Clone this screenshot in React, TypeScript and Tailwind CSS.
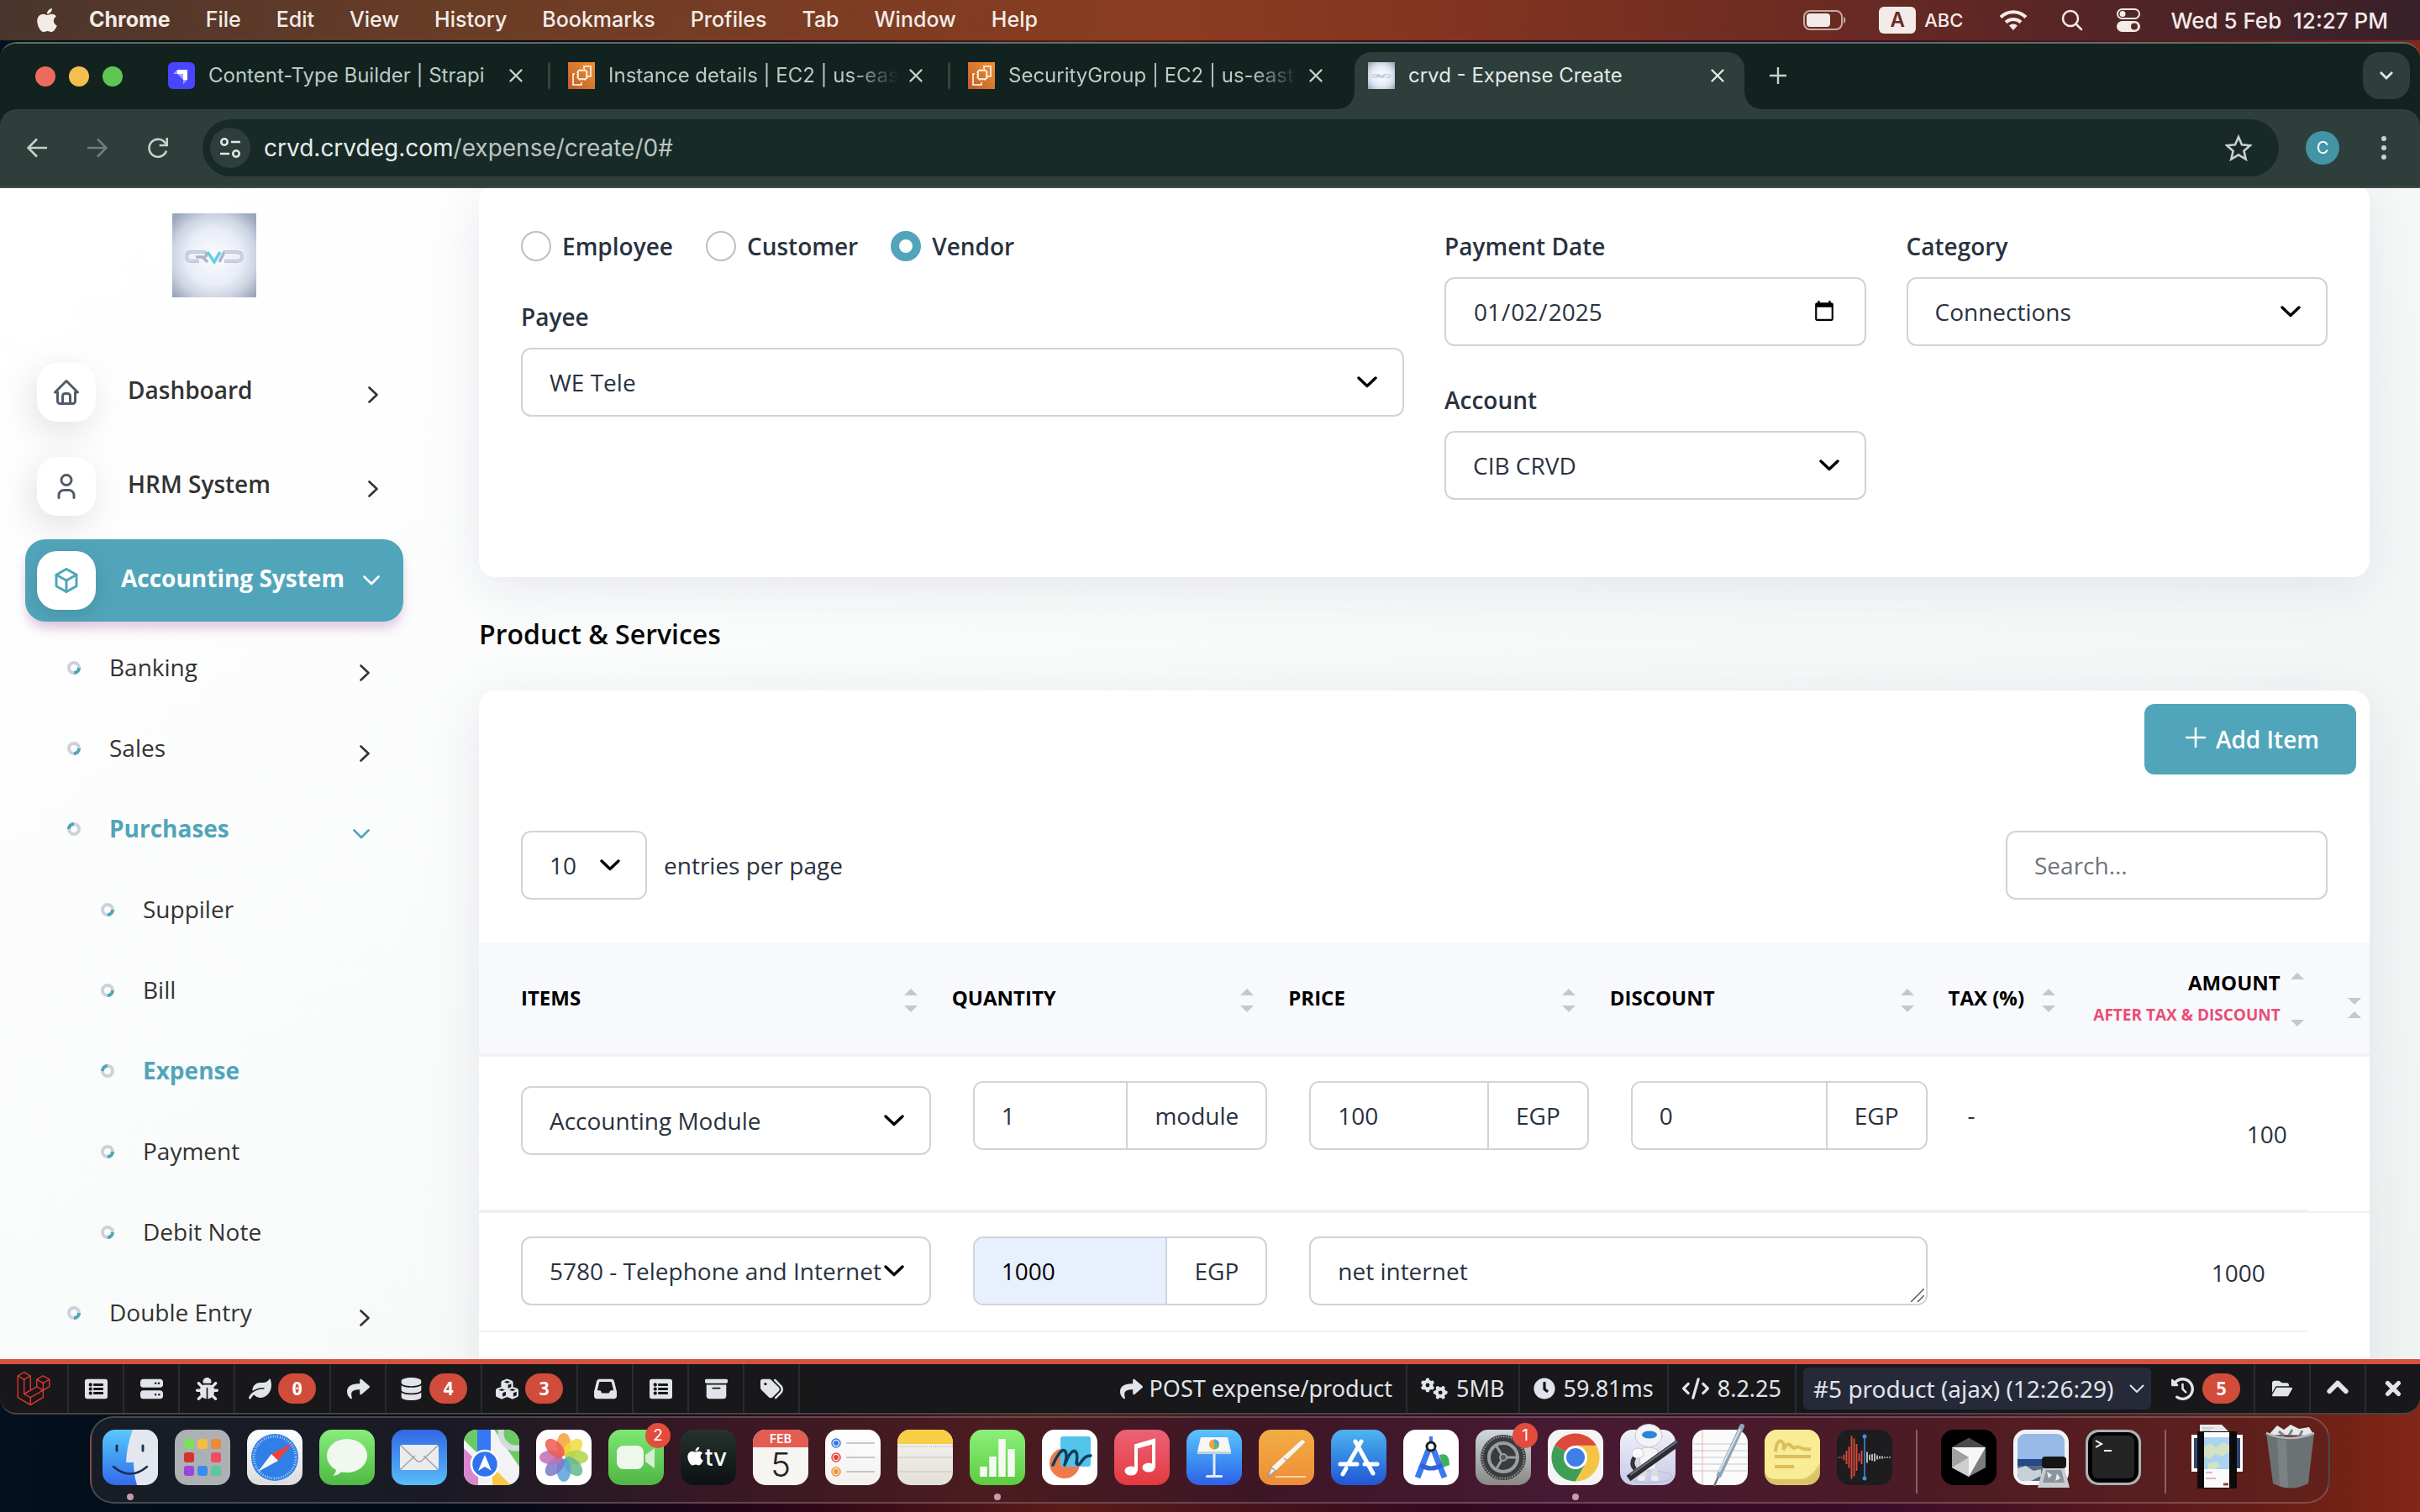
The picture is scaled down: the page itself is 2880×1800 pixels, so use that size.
import { ReactNode } from "react";
import { FaApple, FaClock, FaDatabase, FaLaravel, FaLeaf, FaListAlt, FaShare } from "react-icons/fa";
import {
  FaBoxArchive,
  FaBug,
  FaChevronUp,
  FaClockRotateLeft,
  FaCode,
  FaCubes,
  FaFolderOpen,
  FaGears,
  FaInbox,
  FaServer,
  FaTags,
  FaXmark,
} from "react-icons/fa6";
import { TbBox, TbHome, TbUser } from "react-icons/tb";

const menus = ["File", "Edit", "View", "History", "Bookmarks", "Profiles", "Tab", "Window", "Help"];

const fieldClass =
  "h-[82px] w-full appearance-none rounded-xl border-2 border-[#ced4da] bg-white pl-8 text-[28px] text-[#293240] outline-none";

/* ---------- macOS menu bar ---------- */

function MenuBar() {
  return (
    <header className="flex h-12 shrink-0 items-center bg-[linear-gradient(90deg,#4a352c_0%,#6b3d26_20%,#8b3c20_48%,#833420_60%,#632824_80%,#38202a_100%)] pr-[38px] pl-10 font-['Inter',sans-serif] text-[25px] font-medium text-[#f3ebe8]">
      <FaApple className="mr-[34px] size-8" />
      <nav className="flex items-center gap-[42px]">
        <span className="font-bold">Chrome</span>
        {menus.map((m) => (
          <span key={m}>{m}</span>
        ))}
      </nav>
      <div className="ml-auto flex items-center">
        <svg viewBox="0 0 52 24" className="h-6 w-[52px]" fill="none">
          <rect x="1" y="1" width="45" height="22" rx="7" stroke="#c8aaa2" strokeWidth="2" />
          <rect x="4" y="4" width="28" height="16" rx="4" fill="#f3ebe8" />
          <path d="M48 8c3 1 3 7 0 8z" fill="#c8aaa2" />
        </svg>
        <span className="ml-[38px] flex h-8 w-11 items-center justify-center rounded-md bg-[#f3ebe8] text-2xl font-semibold text-[#6a2a22]">A</span>
        <span className="ml-[10px] text-[22px]">ABC</span>
        <svg viewBox="0 0 34 26" className="ml-[43px] h-[26px] w-[34px]" fill="none" stroke="#f3ebe8" strokeWidth="4">
          <path d="M2 9.500a21 21 0 0 1 30 0" />
          <path d="M8 15.500a13 13 0 0 1 18 0" />
          <path d="M17 25l-5-5.500a7 7 0 0 1 10 0z" fill="#f3ebe8" stroke="none" />
        </svg>
        <svg viewBox="0 0 26 26" className="ml-10 size-[26px]" fill="none" stroke="#f3ebe8" strokeWidth="2.500" strokeLinecap="round">
          <circle cx="11" cy="11" r="9" />
          <path d="M17.500 17.500l6.500 6.500" />
        </svg>
        <svg viewBox="0 0 28 28" className="ml-10 size-7" fill="none">
          <rect x="1" y="1" width="26" height="11" rx="5.500" stroke="#f3ebe8" strokeWidth="2" />
          <circle cx="7" cy="6.500" r="3.500" fill="#f3ebe8" />
          <rect x="0" y="15" width="28" height="13" rx="6.500" fill="#f3ebe8" />
          <circle cx="21" cy="21.500" r="4" fill="#5d2725" />
        </svg>
        <span className="ml-9 text-[26px] whitespace-pre">Wed 5 Feb  12:27 PM</span>
      </div>
    </header>
  );
}

/* ---------- Browser chrome ---------- */

function CloseIcon({ color = "#c5d2ce" }) {
  return (
    <svg viewBox="0 0 16 16" className="size-4" stroke={color} strokeWidth="2.400" strokeLinecap="round">
      <path d="M1.500 1.500l13 13M14.500 1.500l-13 13" />
    </svg>
  );
}

function StrapiIcon() {
  return (
    <svg viewBox="0 0 32 32" className="size-8 shrink-0">
      <rect width="32" height="32" rx="6" fill="#4945ff" />
      <path d="M11 9h12v12h-5v-7h-7z" fill="#fff" />
      <path d="M6 14l5-5v5zM18 21h5l-5 5z" fill="#a5a3ff" />
      <path d="M11 14h7v7z" fill="#a5a3ff" />
    </svg>
  );
}

function Ec2Icon() {
  return (
    <svg viewBox="0 0 32 32" className="size-8 shrink-0 bg-linear-to-tr from-[#c25a2c] to-[#ec9430]" fill="none" stroke="#fff" strokeWidth="1.500">
      <rect x="12" y="10" width="10" height="10" rx="1" />
      <path d="M14 10V8M17 10V8M20 10V8M14 22v-2M17 22v-2M20 22v-2M12 12h-2M12 15h-2M12 18h-2M24 12h-2M24 15h-2M24 18h-2" strokeWidth="1" />
      <path d="M19 8V5h8v12h-4M8 14H6v13h10v-3" />
    </svg>
  );
}

function CrvdLogo({ className }: { className: string }) {
  return (
    <svg viewBox="0 0 100 100" className={className} fill="none">
      <defs>
        <radialGradient id="crvd" cx="50%" cy="52%" r="66%">
          <stop offset="0" stopColor="#fbfcff" />
          <stop offset="0.500" stopColor="#e9edf6" />
          <stop offset="0.750" stopColor="#cdd4e2" />
          <stop offset="1" stopColor="#9ba6bb" />
        </radialGradient>
      </defs>
      <rect width="100" height="100" fill="url(#crvd)" />
      <g stroke="#aeb4cc" strokeWidth="3.500">
        <path d="M40 46H22q-5 0-5 5.500t5 5.500h10" />
        <path d="M28 52h10q3-1 3-3t-3-3M36 52l6 6" />
        <path d="M56 58l6-12h14q7 0 7 5.500t-7 5.500H62" />
      </g>
      <g stroke="#eef1fa" strokeWidth="1.200">
        <path d="M40 46H22q-5 0-5 5.500t5 5.500h10" />
        <path d="M62 46h14q7 0 7 5.500t-7 5.500H62" />
      </g>
      <path d="M42 46l8 12 7-12" stroke="#63cfe4" strokeWidth="3.500" />
    </svg>
  );
}

function Tab({ icon, title, fade = false }: { icon: ReactNode; title: string; fade?: boolean }) {
  return (
    <div className="flex h-14 w-[431px] items-center">
      {icon}
      <span
        className={
          fade
            ? "ml-4 w-[352px] [mask-image:linear-gradient(90deg,#000_82%,transparent_98%)] text-2xl whitespace-nowrap text-[#bccac6]"
            : "ml-4 w-[352px] text-2xl whitespace-nowrap text-[#bccac6]"
        }
      >
        {title}
      </span>
      <button aria-label="Close tab" className="ml-[6px]">
        <CloseIcon />
      </button>
    </div>
  );
}

function BrowserBar() {
  return (
    <div className="shrink-0 bg-[#12221f] font-['Inter',sans-serif]">
      <div className="flex h-[78px] items-end">
        <div className="flex h-[68px] w-full items-start pr-3 pl-[42px]">
          <div className="mt-[17px] flex w-[158px] shrink-0 gap-4">
            <span className="size-6 rounded-full bg-[#ed6a5e]" />
            <span className="size-6 rounded-full bg-[#f5bf4f]" />
            <span className="size-6 rounded-full bg-[#61c554]" />
          </div>
          <div className="flex h-14 items-center gap-[21px]">
            <Tab icon={<StrapiIcon />} title="Content-Type Builder | Strapi" />
            <span className="h-8 w-[3px] rounded bg-[#33443f]" />
            <Tab fade icon={<Ec2Icon />} title="Instance details | EC2 | us-eas" />
            <span className="h-8 w-[3px] rounded bg-[#33443f]" />
            <Tab fade icon={<Ec2Icon />} title="SecurityGroup | EC2 | us-east" />
          </div>
          <div className="relative ml-[29px] flex h-[68px] w-[464px] shrink-0 items-start rounded-t-[20px] bg-[#2d3e3b] px-4 pt-3">
            <svg viewBox="0 0 24 24" className="absolute bottom-0 -left-6 size-6">
              <path d="M24 0v24H0Q24 24 24 0z" fill="#2d3e3b" />
            </svg>
            <svg viewBox="0 0 24 24" className="absolute -right-6 bottom-0 size-6">
              <path d="M0 0v24h24Q0 24 0 0z" fill="#2d3e3b" />
            </svg>
            <CrvdLogo className="size-8 shrink-0" />
            <span className="ml-4 text-2xl leading-8 text-[#e2e8e6]">crvd - Expense Create</span>
            <button aria-label="Close tab" className="mt-2 mr-2 ml-auto">
              <CloseIcon color="#e2e8e6" />
            </button>
          </div>
          <button aria-label="New tab" className="mt-[18px] ml-[30px]">
            <svg viewBox="0 0 20 20" className="size-5" stroke="#c5d2ce" strokeWidth="2.400">
              <path d="M10 0v20M0 10h20" />
            </svg>
          </button>
          <button aria-label="Search tabs" className="ml-auto flex size-14 items-center justify-center rounded-[20px] bg-[#2d3e3b]">
            <svg viewBox="0 0 16 10" className="h-[10px] w-4" fill="none" stroke="#e2e8e6" strokeWidth="2.800">
              <path d="M1 1l7 7 7-7" />
            </svg>
          </button>
        </div>
      </div>
      <div className="flex h-[94px] items-center rounded-t-[20px] border-b-2 border-[#444b48] bg-[#2d3e3b] pr-9 pl-8">
        <button aria-label="Back">
          <svg viewBox="0 0 24 24" className="size-6" fill="none" stroke="#c5d2ce" strokeWidth="2.600">
            <path d="M24 12H2M12 1.500L1.500 12 12 22.500" />
          </svg>
        </button>
        <button aria-label="Forward" className="ml-12">
          <svg viewBox="0 0 24 24" className="size-6" fill="none" stroke="#6d7f7a" strokeWidth="2.600">
            <path d="M0 12h22M12 1.500L22.500 12 12 22.500" />
          </svg>
        </button>
        <button aria-label="Reload" className="ml-12">
          <svg viewBox="0 0 24 24" className="size-6" fill="none" stroke="#c5d2ce" strokeWidth="2.600">
            <path d="M22 15.500A10.500 10.500 0 1 1 20.500 6l2 2.500" />
            <path d="M22.700 0v9h-9" />
          </svg>
        </button>
        <div className="ml-[41px] flex h-[68px] flex-1 items-center rounded-full bg-[#182a27] pr-8 pl-[9px]">
          <span className="flex size-12 items-center justify-center rounded-full bg-[#2d3e3b]">
            <svg viewBox="0 0 26 24" className="h-6 w-[26px]" fill="none" stroke="#e2e8e6" strokeWidth="2.600">
              <circle cx="6" cy="5" r="3.700" />
              <path d="M14 5h11M1 19h11" />
              <circle cx="20" cy="19" r="3.700" />
            </svg>
          </span>
          <span className="ml-4 text-[28px] text-[#e6ecea]">
            crvd.crvdeg.com<span className="text-[#b9c5c2]">/expense/create/0#</span>
          </span>
          <svg viewBox="0 0 32 32" className="ml-auto size-8" fill="none" stroke="#c9cfd0" strokeWidth="2.600">
            <path d="M16 3l4 9.200 10 .9-7.600 6.600 2.300 9.800L16 24.300l-8.700 5.200 2.300-9.800L2 13.100l10-.9z" />
          </svg>
        </div>
        <span className="ml-8 flex size-10 items-center justify-center rounded-full bg-[#4394a5] text-xl text-white">C</span>
        <svg viewBox="0 0 6 28" className="mr-1 ml-[50px] h-7 w-[6px]" fill="#c5d2ce">
          <circle cx="3" cy="3" r="3" />
          <circle cx="3" cy="14" r="3" />
          <circle cx="3" cy="25" r="3" />
        </svg>
      </div>
    </div>
  );
}

/* ---------- Sidebar ---------- */

function Chevron({ dir }: { dir: "right" | "down" }) {
  return dir === "right" ? (
    <svg viewBox="0 0 12 20" className="h-5 w-3" fill="none" stroke="currentColor" strokeWidth="2.600" strokeLinecap="round" strokeLinejoin="round">
      <path d="M1.500 1.500l9 8.500-9 8.500" />
    </svg>
  ) : (
    <svg viewBox="0 0 20 12" className="h-3 w-5" fill="none" stroke="currentColor" strokeWidth="2.600" strokeLinecap="round" strokeLinejoin="round">
      <path d="M1.500 1.500L10 10l8.500-8.500" />
    </svg>
  );
}

const modules = [
  { name: "Dashboard", icon: TbHome, active: false },
  { name: "HRM System", icon: TbUser, active: false },
  { name: "Accounting System", icon: TbBox, active: true },
];

const links = [
  { name: "Banking", level: 1, arrow: "right", active: false },
  { name: "Sales", level: 1, arrow: "right", active: false },
  { name: "Purchases", level: 1, arrow: "down", active: true },
  { name: "Suppiler", level: 2, arrow: "", active: false },
  { name: "Bill", level: 2, arrow: "", active: false },
  { name: "Expense", level: 2, arrow: "", active: true },
  { name: "Payment", level: 2, arrow: "", active: false },
  { name: "Debit Note", level: 2, arrow: "", active: false },
  { name: "Double Entry", level: 1, arrow: "right", active: false },
];

function Bullet({ active }: { active: boolean }) {
  return (
    <svg viewBox="0 0 16 16" className="mb-[2px] size-4" fill="none" strokeWidth="4">
      <circle cx="8" cy="8" r="6" stroke="#cdd2da" />
      <path d={active ? "M2 8a6 6 0 0 1 6-6" : "M14 8a6 6 0 0 1-6 6"} stroke="#51a5ba" />
    </svg>
  );
}

function Sidebar() {
  return (
    <aside className="w-[510px] shrink-0 px-[30px] pt-[30px] text-[28px] text-[#333]">
      <CrvdLogo className="mx-auto size-[100px]" />
      <nav className="mt-16">
        <ul className="flex flex-col gap-[14px]">
          {modules.map(({ name, icon: Icon, active }) => (
            <li key={name}>
              <a
                href="#"
                className={
                  active
                    ? "flex h-[98px] items-center rounded-3xl bg-[#51a5ba] pr-7 pl-[14px] font-bold text-white shadow-[0_10px_14px_-2px_rgba(180,120,180,0.4)]"
                    : "flex h-[98px] items-center pr-[30px] pl-[14px] font-semibold"
                }
              >
                <span
                  className={
                    active
                      ? "mr-[30px] flex size-[70px] items-center justify-center rounded-3xl bg-white text-[#51a5ba] shadow-[0_6px_24px_rgba(0,0,0,0.12)]"
                      : "mr-[38px] flex size-[70px] items-center justify-center rounded-3xl bg-white text-[#525b69] shadow-[-6px_12px_44px_rgba(0,0,0,0.12)]"
                  }
                >
                  <Icon className="size-9" />
                </span>
                <span className="pb-[6px]">{name}</span>
                <span className={active ? "ml-auto" : "ml-auto pt-[6px]"}>
                  <Chevron dir={active ? "down" : "right"} />
                </span>
              </a>
            </li>
          ))}
        </ul>
        <ul className="mt-2">
          {links.map((l) => (
            <li key={l.name}>
              <a
                href="#"
                className={`flex h-24 items-center pr-10 ${l.level === 1 ? "pl-[50px]" : "pl-[90px]"} ${l.active ? "font-bold text-[#51a5ba]" : "font-medium"}`}
              >
                <Bullet active={l.active} />
                <span className="ml-[34px] pb-1">{l.name}</span>
                <span className="ml-auto pt-[10px]">
                  {l.arrow === "right" && <Chevron dir="right" />}
                  {l.arrow === "down" && <Chevron dir="down" />}
                </span>
              </a>
            </li>
          ))}
        </ul>
      </nav>
    </aside>
  );
}

/* ---------- Expense form ---------- */

function Select({ id, value, label }: { id: string; value: string; label?: string }) {
  return (
    <div className="relative">
      <select id={id} aria-label={label} className={`${fieldClass} pr-12`}>
        <option>{value}</option>
      </select>
      <svg viewBox="0 0 24 14" className="pointer-events-none absolute top-[34px] right-8 h-[14px] w-6" fill="none" stroke="#000" strokeWidth="3.400" strokeLinecap="round" strokeLinejoin="round">
        <path d="M2 2l10 9.500L22 2" />
      </svg>
    </div>
  );
}

function Field({ id, label, children }: { id: string; label: string; children: ReactNode }) {
  return (
    <div>
      <label htmlFor={id} className="mb-[18px] block text-[28px] leading-[38px] font-semibold">
        {label}
      </label>
      {children}
    </div>
  );
}

function InputGroup({ label, value, unit, filled = false }: { label: string; value: string; unit: string; filled?: boolean }) {
  return (
    <div className="flex h-[82px] overflow-hidden rounded-xl border-2 border-[#ced4da]">
      <input
        aria-label={label}
        defaultValue={value}
        className={filled ? "w-0 flex-1 bg-[#e8effd] pl-8 text-black outline-none" : "w-0 flex-1 bg-white pl-8 outline-none"}
      />
      <span className="flex items-center border-l-2 border-[#ced4da] px-8">{unit}</span>
    </div>
  );
}

function Sort({ variant = "normal" }: { variant?: "normal" | "tall" | "flipped" }) {
  const up = <path d="M0 8l8-8 8 8z" />;
  const down = <path d="M0 0l8 8 8-8z" />;
  const gap = variant === "tall" ? "gap-12" : variant === "flipped" ? "gap-2" : "gap-3";
  return (
    <span className={`flex flex-col ${gap}`}>
      <svg viewBox="0 0 16 8" className="h-2 w-4" fill="#c6c7cb">{variant === "flipped" ? down : up}</svg>
      <svg viewBox="0 0 16 8" className="h-2 w-4" fill="#c6c7cb">{variant === "flipped" ? up : down}</svg>
    </span>
  );
}

function HeadCell({ title, first = false }: { title: string; first?: boolean }) {
  return (
    <th className={first ? "border-b-4 border-[#f1f1f1] pr-4 pl-[50px]" : "border-b-4 border-[#f1f1f1] pr-4 pl-[25px]"}>
      <div className="flex items-center justify-between">
        {title}
        <span className="pt-[6px]">
          <Sort />
        </span>
      </div>
    </th>
  );
}

function ItemsTable() {
  return (
    <table className="mt-[51px] w-full table-fixed border-separate border-spacing-0 text-left text-[28px]">
      <colgroup>
        <col className="w-[23.9%]" />
        <col className="w-[17.8%]" />
        <col className="w-[17%]" />
        <col className="w-[17.9%]" />
        <col className="w-[7.5%]" />
        <col className="w-[12.6%]" />
        <col className="w-[3.3%]" />
      </colgroup>
      <thead className="bg-[#f8f9fd] text-2xl font-bold text-black">
        <tr className="h-[136px]">
          <HeadCell first title="ITEMS" />
          <HeadCell title="QUANTITY" />
          <HeadCell title="PRICE" />
          <HeadCell title="DISCOUNT" />
          <HeadCell title="TAX (%)" />
          <th className="border-b-4 border-[#f1f1f1] pt-1 pr-1">
            <div className="flex items-center justify-end gap-3">
              <div className="text-right leading-9">
                AMOUNT
                <small className="block text-[19px] leading-10 text-[#ea4c74]">AFTER TAX &amp; DISCOUNT</small>
              </div>
              <Sort variant="tall" />
            </div>
          </th>
          <th className="border-b-4 border-[#f1f1f1] pt-6 pr-[10px]">
            <div className="flex justify-end">
              <Sort variant="flipped" />
            </div>
          </th>
        </tr>
      </thead>
      <tbody className="align-top">
        <tr className="h-[186px]">
          <td className="border-b-4 border-[#f1f1f1] pt-[35px] pl-[50px]">
            <Select id="item" label="Item" value="Accounting Module" />
          </td>
          <td className="border-b-4 border-[#f1f1f1] pt-[29px] pl-[50px]">
            <InputGroup label="Quantity" value="1" unit="module" />
          </td>
          <td className="border-b-4 border-[#f1f1f1] pt-[29px] pl-[50px]">
            <InputGroup label="Price" value="100" unit="EGP" />
          </td>
          <td className="border-b-4 border-[#f1f1f1] pt-[29px] pl-[50px]">
            <InputGroup label="Discount" value="0" unit="EGP" />
          </td>
          <td className="border-b-4 border-[#f1f1f1] pt-[48px] pl-[48px]">-</td>
          <td className="border-b-4 border-[#f1f1f1] pt-[71px] pr-6 text-right">100</td>
          <td className="border-b-2 border-[#f1f1f1]" />
        </tr>
        <tr className="h-[142px]">
          <td className="border-b-2 border-[#f1f1f1] pt-7 pl-[50px]">
            <Select id="account-line" label="Account line" value="5780 - Telephone and Internet" />
          </td>
          <td className="border-b-2 border-[#f1f1f1] pt-7 pl-[50px]">
            <InputGroup filled label="Amount" value="1000" unit="EGP" />
          </td>
          <td colSpan={2} className="border-b-2 border-[#f1f1f1] pt-7 pl-[50px]">
            <div className="relative">
              <textarea aria-label="Description" defaultValue="net internet" className={`${fieldClass} block resize-none overflow-hidden pt-[18px]`} />
              <svg viewBox="0 0 16 16" className="absolute right-1 bottom-1 size-4" stroke="#555" strokeWidth="1.500">
                <path d="M0 16L16 0M8 16l8-8" />
              </svg>
            </div>
          </td>
          <td className="border-b-2 border-[#f1f1f1]" />
          <td className="border-b-2 border-[#f1f1f1] pt-[50px] pr-[50px] text-right">1000</td>
          <td />
        </tr>
      </tbody>
    </table>
  );
}

function ExpensePage() {
  return (
    <main className="min-w-0 flex-1 px-[60px] text-[#293240]">
      <section className="-mt-[6px] grid grid-cols-4 gap-12 rounded-[20px] bg-white px-[50px] pt-14 pb-[92px] shadow-[0_12px_60px_rgba(182,186,203,0.3)]">
        <div className="col-span-2 flex flex-col gap-[46px]">
          <div className="flex h-[38px] items-center gap-[39px] text-[28px] font-semibold">
            {["Employee", "Customer", "Vendor"].map((type) => (
              <label key={type} className="flex items-center gap-[13px]">
                <input
                  type="radio"
                  name="type"
                  defaultChecked={type === "Vendor"}
                  className="size-9 appearance-none rounded-full border-2 border-[#bfbfbf] bg-white checked:border-[10px] checked:border-[#51a5ba]"
                />
                {type}
              </label>
            ))}
          </div>
          <Field id="payee" label="Payee">
            <Select id="payee" value="WE Tele" />
          </Field>
        </div>
        <div className="flex flex-col gap-[45px]">
          <Field id="date" label="Payment Date">
            <input
              id="date"
              type="date"
              defaultValue="2025-01-02"
              className={`${fieldClass} pr-8 [&::-webkit-calendar-picker-indicator]:size-7`}
            />
          </Field>
          <Field id="account" label="Account">
            <Select id="account" value="CIB CRVD" />
          </Field>
        </div>
        <Field id="category" label="Category">
          <Select id="category" value="Connections" />
        </Field>
      </section>

      <h2 className="mt-[46px] text-[32px] leading-[44px] font-semibold text-[#060606]">Product &amp; Services</h2>

      <section className="mt-[45px] h-[900px] rounded-[20px] bg-white pt-4 shadow-[0_12px_60px_rgba(182,186,203,0.3)]">
        <div className="flex justify-end pr-4">
          <button className="flex h-[84px] items-center gap-3 rounded-xl bg-[#51a5ba] pr-11 pl-[49px] text-[28px] font-semibold text-white">
            <svg viewBox="0 0 24 24" className="mb-1 size-6" stroke="#fff" strokeWidth="2.500" strokeLinecap="round">
              <path d="M12 1v22M1 12h22" />
            </svg>
            Add Item
          </button>
        </div>
        <div className="mt-[67px] flex items-center justify-between px-[50px] text-[28px]">
          <div className="flex items-center gap-5">
            <div className="w-[150px]">
              <Select id="entries" value="10" />
            </div>
            <label htmlFor="entries">entries per page</label>
          </div>
          <div className="w-[383px]">
            <input type="search" aria-label="Search" placeholder="Search..." className={`${fieldClass} placeholder:text-[#6c757d]`} />
          </div>
        </div>
        <ItemsTable />
      </section>
    </main>
  );
}

/* ---------- Debug bar ---------- */

const debugTabs = [
  { icon: FaListAlt, label: "Messages" },
  { icon: FaServer, label: "Timeline" },
  { icon: FaBug, label: "Exceptions" },
  { icon: FaLeaf, label: "Views", count: "0" },
  { icon: FaShare, label: "Route" },
  { icon: FaDatabase, label: "Queries", count: "4" },
  { icon: FaCubes, label: "Models", count: "3" },
  { icon: FaInbox, label: "Mails" },
  { icon: FaListAlt, label: "Gate" },
  { icon: FaBoxArchive, label: "Session" },
  { icon: FaTags, label: "Request" },
];

function Count({ children }: { children: ReactNode }) {
  return (
    <span className="flex h-9 w-[45px] items-center justify-center rounded-full bg-[#d14c3b] font-['DejaVu_Sans_Mono',monospace] text-[22px] font-bold text-white">{children}</span>
  );
}

function DebugBar() {
  return (
    <footer className="flex h-[66px] shrink-0 items-stretch overflow-hidden rounded-b-[20px] border-t-[6px] border-b-2 border-t-[#d8523d] border-b-[#444] bg-[#18181a] font-['Noto_Sans',sans-serif] text-[27px] text-[#e1e4ea]">
      <span className="flex w-20 items-center justify-center">
        <FaLaravel className="size-10 text-[#ef3b2d]" />
      </span>
      {debugTabs.map(({ icon: Icon, label, count }) => (
        <button key={label} aria-label={label} className="flex min-w-[66px] items-center justify-center gap-2 border-l-2 border-[#292a35] px-4">
          <Icon className="size-[27px]" />
          {count && <Count>{count}</Count>}
        </button>
      ))}
      <span className="border-l-2 border-[#292a35]" />
      <span className="ml-auto flex items-center gap-2 pr-4">
        <FaShare className="size-[27px]" />
        POST expense/product
      </span>
      <span className="flex items-center gap-[10px] border-l-2 border-[#292a35] px-4">
        <FaGears className="size-8" />
        5MB
      </span>
      <span className="flex items-center gap-[10px] border-l-2 border-[#292a35] px-4">
        <FaClock className="size-[26px]" />
        59.81ms
      </span>
      <span className="flex items-center gap-[10px] border-l-2 border-[#292a35] px-4">
        <FaCode className="size-8" />
        8.2.25
      </span>
      <span className="flex items-center border-l-2 border-[#292a35] px-2">
        <span className="relative flex h-[50px] items-center rounded-md bg-[#262a38]">
          <select aria-label="Request" className="h-full w-[414px] appearance-none bg-transparent pl-3 text-[28px] outline-none">
            <option>#5 product (ajax) (12:26:29)</option>
          </select>
          <svg viewBox="0 0 18 10" className="pointer-events-none absolute right-2 h-[10px] w-[18px]" fill="none" stroke="#e1e4ea" strokeWidth="2">
            <path d="M1 1l8 8 8-8" />
          </svg>
        </span>
      </span>
      <button aria-label="History" className="flex items-center gap-[10px] pr-4 pl-4">
        <FaClockRotateLeft className="size-[27px]" />
        <Count>5</Count>
      </button>
      <button aria-label="Open" className="flex w-[66px] items-center justify-center border-l-2 border-[#292a35]">
        <FaFolderOpen className="size-6" />
      </button>
      <button aria-label="Minimize" className="flex w-[66px] items-center justify-center border-l-2 border-[#292a35]">
        <FaChevronUp className="size-[26px]" strokeWidth="50" stroke="currentColor" />
      </button>
      <button aria-label="Close" className="flex w-[66px] items-center justify-center border-l-2 border-[#292a35]">
        <FaXmark className="size-[26px]" strokeWidth="40" stroke="currentColor" />
      </button>
    </footer>
  );
}

/* ---------- Dock ---------- */

function Tile({ className, children, badge, running = false }: { className: string; children: ReactNode; badge?: string; running?: boolean }) {
  return (
    <div className="relative flex size-[66px] shrink-0 justify-center">
      <svg viewBox="0 0 66 66" className={`size-[66px] rounded-[15px] ${className}`} fill="none">
        {children}
      </svg>
      {badge && (
        <span className="absolute -top-2 -right-2 flex size-[30px] items-center justify-center rounded-full bg-[#e34b3d] text-[19px] text-white">{badge}</span>
      )}
      {running && <span className="absolute top-[76px] size-2 rounded-full bg-[#c79bab]" />}
    </div>
  );
}

const launchpad = ["#7ee05a", "#f5bd3d", "#ef8a35", "#d3352d", "#a9b2b5", "#ef4d62", "#9c45d8", "#3a8df0", "#5fc79d"];
const petals = ["#f6a03a", "#f0da3c", "#b5d24a", "#63b98a", "#5aa2dd", "#7b78c8", "#c070b4", "#ee5b50"];
const redWave = [1, 1, 4, 10, 16, 32, 28, 20, 6, 10];
const whiteWave = [8, 4, 5, 6, 3, 2, 2, 1, 1, 1];

function Dock() {
  return (
    <div className="mx-auto mt-[2px] flex h-[104px] items-start gap-5 rounded-[28px] border-2 border-white/20 bg-[linear-gradient(90deg,#171d26_0%,#1b1a24_16%,#391824_28%,#4b1c20_40%,#3d1626_52%,#471a33_66%,#4d1b25_82%,#63211a_100%)] px-[13px] pt-[14px] font-['Inter',sans-serif]">
      <Tile running className="overflow-hidden bg-linear-to-b from-[#5ac8fa] to-[#3569ea]">
        <path d="M36 0Q29 18 28 39h9q0 14 4 27h25V0z" fill="#e3e8ef" />
        <path d="M17 19v6M48 19v6" stroke="#1c3357" strokeWidth="3" strokeLinecap="round" />
        <path d="M13 44q20 17 40 0" stroke="#1c2f4f" strokeWidth="2.500" strokeLinecap="round" />
      </Tile>
      <Tile className="bg-[#adb0b4]">
        {launchpad.map((c, i) => (
          <rect key={c} x={11 + (i % 3) * 16} y={11 + Math.floor(i / 3) * 16} width="12" height="12" rx="3" fill={c} />
        ))}
      </Tile>
      <Tile className="bg-linear-to-b from-white to-[#dcdcdc]">
        <circle cx="33" cy="33" r="28" fill="#2f7fe6" />
        <circle cx="33" cy="33" r="25" stroke="#cfe3fb" strokeWidth="3" strokeDasharray="0.800 2" />
        <path d="M54 16L37 37l-8-8z" fill="#ec4537" />
        <path d="M13 50l16-21 8 8z" fill="#f6f6f6" />
      </Tile>
      <Tile className="bg-linear-to-b from-[#86ee79] to-[#4fb944]">
        <ellipse cx="33" cy="31" rx="24" ry="20" fill="#f0f8ef" />
        <path d="M20 44q1 7-4 11 8-1 12-7z" fill="#f0f8ef" />
      </Tile>
      <Tile className="bg-linear-to-b from-[#3467e3] to-[#5bbcf8]">
        <rect x="10" y="18" width="46" height="30" rx="3" fill="#ececec" />
        <path d="M11 47l17-16M55 47L38 31M11 19l18 17q4 4 8 0l18-17" stroke="#a0a5aa" strokeWidth="1.500" />
      </Tile>
      <Tile className="overflow-hidden bg-[#f2f3f4]">
        <path d="M0 0h16v28L0 12zM36 0h30v44z" fill="#6bcb62" />
        <path d="M0 22l17 17v27H0z" fill="#d987cc" />
        <path d="M34 66V44l22 22z" fill="#f7c945" />
        <path d="M16 0h16v30H16z" fill="#3478f6" />
        <circle cx="62" cy="4" r="18" stroke="#d5dade" strokeWidth="7" />
        <circle cx="25" cy="41" r="16" fill="#2f74ee" stroke="#fff" strokeWidth="2.500" />
        <path d="M25 30l8 19-8-5-8 5z" fill="#fff" />
      </Tile>
      <Tile className="bg-white">
        {petals.map((c, i) => (
          <ellipse key={c} cx="33" cy="18" rx="8.500" ry="14" fill={c} opacity="0.850" transform={`rotate(${i * 45} 33 33)`} />
        ))}
        <circle cx="33" cy="33" r="2" fill="#fff" />
      </Tile>
      <Tile badge="2" className="bg-linear-to-b from-[#7de872] to-[#4fb643]">
        <rect x="10" y="19" width="32" height="28" rx="8" fill="#eef7ec" />
        <path d="M44 30l11-8v24l-11-8z" fill="#d6eed2" />
      </Tile>
      <Tile className="bg-linear-to-b from-[#26332f] to-[#0c1113]">
        <FaApple x="5" y="19" size={25} color="#fff" />
        <text x="29" y="43" fontSize="28" fontWeight="500" fill="#fff">tv</text>
      </Tile>
      <Tile className="overflow-hidden bg-[#f6f5f2]">
        <path d="M0 0h66v21H0z" fill="#e35d52" />
        <text x="33" y="16" fontSize="14" fontWeight="600" fill="#fff" textAnchor="middle">FEB</text>
        <text x="33" y="56" fontSize="40" fill="#222" textAnchor="middle" fontWeight="300">5</text>
      </Tile>
      <Tile className="bg-linear-to-b from-white to-[#f2f1ee]">
        {["#2f76f0", "#e2453a", "#ec9430"].map((c, i) => (
          <g key={c}>
            <circle cx="13" cy={16 + i * 17} r="5" stroke={c} strokeWidth="1.500" />
            <circle cx="13" cy={16 + i * 17} r="3" fill={c} />
            <path d={`M25 ${16 + i * 17}h34`} stroke="#b9b9b9" strokeWidth="1.500" />
          </g>
        ))}
      </Tile>
      <Tile className="overflow-hidden bg-linear-to-b from-[#f6f5f2] to-[#e2e0d8]">
        <path d="M0 0h66v17H0z" fill="#f7cf46" />
        <path d="M0 20h66" stroke="#c9c5b8" strokeWidth="2" strokeDasharray="1 1.500" />
        <path d="M0 33h66M0 50h66" stroke="#d3d1ca" strokeWidth="1.500" />
      </Tile>
      <Tile running className="bg-linear-to-b from-[#8bf07b] to-[#5ccc3f]">
        <path d="M16.500 44v12M27.500 32v24M38.500 11v45M49.500 23v33" stroke="#f4faf2" strokeWidth="8.500" />
      </Tile>
      <Tile className="bg-white">
        <circle cx="27" cy="40" r="18" fill="#ee7b4c" />
        <rect x="22" y="8" width="36" height="36" rx="3" fill="#52c4ea" />
        <path d="M13 42Q22 22 27 25Q31 28 27 42Q35 22 40 26Q43 29 41 40Q43 44 47 38Q52 30 58 31" stroke="#12395c" strokeWidth="3.500" strokeLinecap="round" strokeLinejoin="round" />
      </Tile>
      <Tile className="bg-linear-to-b from-[#ea6276] to-[#e5373e]">
        <path d="M26 49V19l21-6v32" stroke="#fff" strokeWidth="4" />
        <path d="M26 23l21-6v-5l-21 6z" fill="#fff" />
        <ellipse cx="20" cy="49" rx="7.500" ry="5.500" fill="#fff" />
        <ellipse cx="41" cy="45" rx="7.500" ry="5.500" fill="#fff" />
      </Tile>
      <Tile className="bg-linear-to-b from-[#5cc5fb] to-[#2f5fe8]">
        <path d="M17 9h32l4 17H13z" fill="#f4f6f8" />
        <path d="M13 26h40v3H13z" fill="#c6d0da" />
        <circle cx="33" cy="17.500" r="6" fill="#f0a13a" />
        <path d="M33 17.500v-6a6 6 0 0 1 6 6z" fill="#4ea0e8" />
        <path d="M33 17.500h6a6 6 0 0 1-6 6z" fill="#62bf5a" />
        <path d="M33 29v26" stroke="#e4ebf3" strokeWidth="3" />
        <rect x="23" y="54" width="20" height="3" rx="1.500" fill="#e4ebf3" />
      </Tile>
      <Tile className="bg-linear-to-b from-[#f2ae44] to-[#ee8c38]">
        <path d="M50 13q4-2 5 2L20 49l-9 7 4-11z" fill="#f8f5f1" />
        <path d="M30 34l4 3M11 56l4-11 5 4z" stroke="#999" strokeWidth="1.200" />
        <path d="M20 56h36" stroke="#f8d6a8" strokeWidth="2" />
      </Tile>
      <Tile className="bg-linear-to-b from-[#4fb4ef] to-[#2355d3]">
        <path d="M29 14l21 38M36 14L21 40M18 46l-4 7M11 41h20M40 41h15" stroke="#fff" strokeWidth="5" strokeLinecap="round" />
      </Tile>
      <Tile className="bg-white">
        <path d="M43 30q12-4 12 12l-8 3z" fill="#3fb15c" />
        <path d="M30 24L17 57M36 24l13 33" stroke="#3d79f0" strokeWidth="7" />
        <path d="M20 42q13 8 26 0" stroke="#2f62d6" strokeWidth="5" />
        <path d="M33 8v8" stroke="#3d79f0" strokeWidth="4" />
        <circle cx="33" cy="20" r="5" stroke="#1c1c1c" strokeWidth="3" />
      </Tile>
      <Tile badge="1" className="bg-linear-to-b from-[#cfd8df] to-[#8a8986]">
        <circle cx="33" cy="33" r="27" fill="#3a3b3d" />
        <circle cx="33" cy="33" r="25" stroke="#8d8f92" strokeWidth="2.500" strokeDasharray="1.500 1.500" />
        <circle cx="33" cy="33" r="17" stroke="#9b9da0" strokeWidth="4" />
        <path d="M33 33h17M33 33l-9-15M33 33l-9 15" stroke="#9b9da0" strokeWidth="3" />
        <circle cx="33" cy="33" r="4" fill="#55575a" stroke="#9b9da0" strokeWidth="2" />
      </Tile>
      <Tile running className="bg-[#f5f4f4]">
        <path d="M33 33L8.300 18.700A28.500 28.500 0 0 1 57.700 18.700z" fill="#dc4a3b" />
        <path d="M33 33L8.300 18.700A28.500 28.500 0 0 0 33 61.500l12-21z" fill="#3f9e56" />
        <path d="M33 18.700h24.700A28.500 28.500 0 0 1 33 61.500l12.500-22z" fill="#f6c445" />
        <circle cx="33" cy="33" r="14" fill="#fff" />
        <circle cx="33" cy="33" r="11" fill="#3f7ee8" />
      </Tile>
      <Tile className="overflow-visible bg-linear-to-b from-[#f0f0fa] to-[#c9c9e6]">
        <ellipse cx="36" cy="56" rx="26" ry="7" stroke="#b9b9d8" />
        <path d="M22 24q11-6 23 0l-3 24H25z" fill="#f4f4f6" stroke="#c8c8d0" />
        <ellipse cx="21" cy="28" rx="7" ry="6" fill="#fafafc" stroke="#c8c8d0" />
        <path d="M17 33q-5 8 1 14" stroke="#35353b" strokeWidth="5" />
        <ellipse cx="34" cy="7" rx="16" ry="13.500" fill="#f4f4f6" stroke="#c8c8d0" />
        <ellipse cx="35" cy="6" rx="9" ry="4.500" fill="#2a86d8" />
        <path d="M28 46v10M41 46v10" stroke="#dcdce2" strokeWidth="7" />
        <path d="M27 58h-3M43 58h-3" stroke="#ededf2" strokeWidth="6" strokeLinecap="round" />
        <path d="M10 58L70 15" stroke="#2c2c34" strokeWidth="8" />
        <path d="M12 54L68 14" stroke="#74747f" strokeWidth="2" />
      </Tile>
      <Tile className="overflow-visible bg-[#fbfbfb]">
        <path d="M1 17h64M1 25h64M1 33h64M1 41h64M1 49h64" stroke="#c2c6ca" strokeWidth="1.200" />
        <path d="M12 1v64" stroke="#efb7b3" />
        <path d="M59-4L32 54" stroke="#8fa5b8" strokeWidth="6" strokeLinecap="round" />
        <path d="M57-1L32 50" stroke="#d7e2ea" strokeWidth="2" />
        <path d="M31 56l-5 11" stroke="#6b7680" strokeWidth="2.500" />
      </Tile>
      <Tile className="bg-[#d9c468]">
        <path d="M0 14Q0 0 14 0h38q14 0 14 14v30L50 59H14Q0 59 0 46z" fill="#f8ec94" />
        <path d="M66 44q-4 8-16 15-4 1-8 0 15-2 24-20z" fill="#e0cc6a" />
        <path d="M13 26Q15 11 20 14T22 24Q27 15 30 18T35 22Q40 19 44 22Q48 24 55 23M12 32h43M12 44h23" stroke="#dabf5c" strokeWidth="4" />
      </Tile>
      <Tile className="bg-[#1d1d1f]">
        {redWave.map((h, i) => (
          <path key={i} d={`M${2.5 + i * 3} ${33 - h * 0.8}v${h * 1.6}`} stroke="#e2483c" strokeWidth="1.800" />
        ))}
        {whiteWave.map((h, i) => (
          <path key={i} d={`M${36 + i * 3} ${33 - h * 0.8}v${h * 1.6}`} stroke="#e8e8e8" strokeWidth="1.500" />
        ))}
        <path d="M33 8v50" stroke="#3d8fe0" strokeWidth="1.500" />
        <circle cx="33" cy="8" r="2.500" fill="#3d8fe0" />
        <circle cx="33" cy="58" r="2.500" fill="#3d8fe0" />
      </Tile>
      <span className="mx-2 h-[76px] w-[2px] bg-white/30" />
      <Tile className="bg-black">
        <path d="M33 10l20 11v24L33 56 13 45V21z" fill="#7d7d7d" />
        <path d="M33 10l20 11H13z" fill="#4b4b4b" />
        <path d="M13 21l20 12v23L13 45z" fill="#a0a0a0" />
        <path d="M13 45l20-12v23z" fill="#cfcfcf" />
        <path d="M13 21h40L33 56V33z" fill="#f6f6f6" />
      </Tile>
      <Tile className="overflow-visible bg-[#f3f4f5]">
        <rect x="5" y="5" width="56" height="56" rx="9" fill="#96b9e6" />
        <path d="M5 35h56v8H5z" fill="#234a86" />
        <path d="M5 43h56v9q0 9-9 9H14q-9 0-9-9z" fill="#586a7b" />
        <path d="M5 46l10-3 9 6 9-2v8l-12 6h-7q-9 0-9-9z" fill="#c6d2da" />
        <path d="M36 43h24l7 26H29z" fill="#c9cdd0" />
        <path d="M39 48h18l4 15H35z" fill="#8c959b" />
        <path d="M40 50l6 4-4 4zM52 52l4 6-6 3z" fill="#e9eef2" />
        <rect x="34" y="32" width="29" height="14" rx="4" fill="#151515" />
      </Tile>
      <Tile className="bg-[#a9b3b8]">
        <rect x="3" y="3" width="60" height="60" rx="13" fill="#000" />
        <rect x="8" y="7" width="50" height="51" rx="6" fill="#242424" />
        <path d="M12 13l7 4-7 4" stroke="#fff" strokeWidth="2" />
        <path d="M22 25h9" stroke="#fff" strokeWidth="2" />
      </Tile>
      <span className="mx-2 h-[76px] w-[2px] bg-white/30" />
      <Tile className="overflow-visible rounded-none">
        <path d="M2 6h61v44H2z" fill="#fff" />
        <path d="M5 10h5v36H5zM56 10h4v36h-4z" fill="#32476f" />
        <path d="M12-6h26l8 8v12H12z" fill="#e9e9e9" />
        <path d="M15-2h14M15 1h10" stroke="#b5b5b5" />
        <path d="M9 2h47v68H9z" fill="#0c0c0c" />
        <path d="M17 3h30v66H17z" fill="#fbfbfb" />
        <path d="M17 9h30v38H17z" fill="#a9d3ee" />
        <path d="M17 20l8-4 6 5 9-6 7 3v9l-9 5-8-3-6 6-7-3zM22 40l9-2 6 5-8 4h-7z" fill="#d3e2c4" />
        <path d="M19 51h8M19 58h12" stroke="#e6b9b5" strokeWidth="2" />
        <path d="M40 65h6" stroke="#a83c35" strokeWidth="3" />
      </Tile>
      <Tile className="overflow-visible rounded-none">
        <path d="M8 6L18-5l8 5 8-6 10 5 12-2 6 10z" fill="#e7e9ea" />
        <path d="M20 2l6 5M36 0l-4 7M48 1l-3 6" stroke="#6f8795" strokeWidth="3" />
        <path d="M5 4q28 12 57 0l-7 60q-21 11-42 0z" fill="#6c7173" />
        <path d="M18 11l3 56q5 2 10 2l-2-57z" fill="#7c8183" />
        <path d="M5 4q28 12 57 0" stroke="#b4b8ba" strokeWidth="2.500" />
      </Tile>
    </div>
  );
}

export default function App() {
  return (
    <div className="flex h-screen flex-col overflow-hidden bg-[linear-gradient(90deg,#03101d_0%,#020a16_20%,#2a0519_32%,#5b1c17_44%,#330920_60%,#3c0d2a_78%,#6b1f16_95%,#832716_100%)] font-['Open_Sans',sans-serif]">
      <MenuBar />
      <div className="mt-[2px] flex min-h-0 flex-1 flex-col overflow-hidden rounded-t-[20px] border-t-2 border-[#5f6d69]">
        <BrowserBar />
        <div className="flex min-h-0 flex-1 overflow-hidden bg-white bg-[linear-gradient(141.55deg,rgba(240,244,243,0)_3.46%,#f0f4f3_99.86%)]">
          <Sidebar />
          <ExpensePage />
        </div>
      </div>
      <DebugBar />
      <div className="flex h-[116px] shrink-0 items-start">
        <Dock />
      </div>
    </div>
  );
}
